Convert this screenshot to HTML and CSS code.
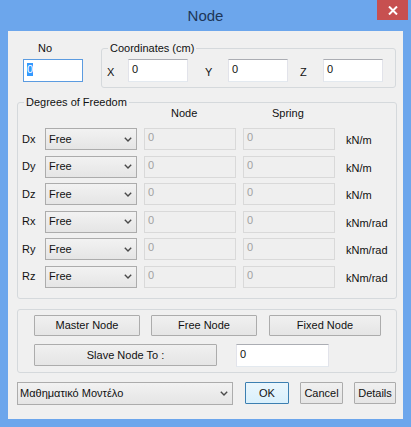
FILE: index.html
```html
<!DOCTYPE html>
<html lang="en">
<head>
    <meta charset="UTF-8">
    <title>Node</title>
    <link rel="stylesheet" href="styles.css">
</head>
<body>
    <div class="window">
        <div class="titlebar">
            <span class="title">Node</span>
            <div class="close-btn">
                <svg width="10" height="9" viewBox="0 0 10 9"><path d="M1 0.5 L9 8.5 M9 0.5 L1 8.5" stroke="#fff" stroke-width="2" fill="none"/></svg>
            </div>
        </div>

        <div class="client">
            <div class="top-row">
                <div class="no-block">
                    <div class="no-label">No</div>
                    <div class="textbox focused"><span class="sel">0</span></div>
                </div>
                <fieldset class="group coords">
                    <legend>Coordinates (cm)</legend>
                    <div class="coord-row">
                        <span class="coord-label">X</span>
                        <div class="textbox coord-box">0</div>
                        <span class="coord-label spaced-y">Y</span>
                        <div class="textbox coord-box">0</div>
                        <span class="coord-label spaced-z">Z</span>
                        <div class="textbox coord-box">0</div>
                    </div>
                </fieldset>
            </div>

            <fieldset class="group dof">
                <legend>Degrees of Freedom</legend>
                <div class="dof-head">
                    <span class="col-node">Node</span>
                    <span>Spring</span>
                </div>
                <div class="dof-rows" id="dofRows"></div>
            </fieldset>

            <div class="group actions">
                <div class="action-row">
                    <div class="btn master-btn">Master Node</div>
                    <div class="btn free-btn">Free Node</div>
                    <div class="btn fixed-btn">Fixed Node</div>
                </div>
                <div class="action-row second">
                    <div class="btn slave-btn">Slave Node To :</div>
                    <div class="textbox slave-box">0</div>
                </div>
            </div>

            <div class="bottom-row">
                <div class="combo model-combo">
                    <span>Μαθηματικό Μοντέλο</span>
                    <svg class="chevron" width="8" height="5" viewBox="0 0 8 5"><path d="M0.8 0.8 L4 4 L7.2 0.8" stroke="#4a4a4a" stroke-width="1.4" fill="none"/></svg>
                </div>
                <div class="btn ok-btn">OK</div>
                <div class="btn cancel-btn">Cancel</div>
                <div class="btn details-btn">Details</div>
            </div>
        </div>
    </div>

    <script>
        const dofs = [
            { name: 'Dx', unit: 'kN/m' },
            { name: 'Dy', unit: 'kN/m' },
            { name: 'Dz', unit: 'kN/m' },
            { name: 'Rx', unit: 'kNm/rad' },
            { name: 'Ry', unit: 'kNm/rad' },
            { name: 'Rz', unit: 'kNm/rad' }
        ];

        const rows = document.getElementById('dofRows');
        dofs.forEach(dof => {
            const row = `<div class="dof-row">
                <span class="dof-label">${dof.name}</span>
                <div class="combo dof-combo">
                    <span>Free</span>
                    <svg class="chevron" width="8" height="5" viewBox="0 0 8 5"><path d="M0.8 0.8 L4 4 L7.2 0.8" stroke="#4a4a4a" stroke-width="1.4" fill="none"/></svg>
                </div>
                <div class="textbox disabled dof-box">0</div>
                <div class="textbox disabled dof-box">0</div>
                <span class="unit">${dof.unit}</span>
            </div>`;
            rows.insertAdjacentHTML('beforeend', row);
        });
    </script>
</body>
</html>
```

FILE: styles.css
```css
* { box-sizing: border-box; }
body { margin: 0; font-family: "Liberation Sans", Arial, sans-serif; font-size: 11px; line-height: 13px; color: #111; }

.window { width: 411px; height: 427px; background: #6ca6ec; padding: 0 8px 8px; }

.titlebar { height: 31px; display: flex; justify-content: center; margin: 0 -8px; position: relative; }
.title { font-size: 15px; line-height: 31px; color: #1d3658; }
.close-btn { position: absolute; top: 0; right: 3px; width: 31px; height: 20px; background: #c75050; display: flex; align-items: center; justify-content: center; }

.client { height: 388px; background: #f0f0f0; padding: 11px 6px 0 9px; }

.textbox { height: 23px; background: #fff; border: 1px solid #abadb3; border-color: #abadb3 #e2e3ea #e3e9ef #e2e3ea; padding: 3px 3px 0; line-height: 13px; }
.textbox.focused { border-color: #5b9be0; }
.textbox.disabled { background: #efefef; border-color: #d9d9d9; color: #a2a2a2; padding-top: 2px; }
.sel { background: #3399ff; color: #fff; display: inline-block; width: 6px; }

.top-row { display: flex; align-items: flex-start; }
.no-block { margin-left: 6px; width: 60px; }
.no-label { padding-left: 15px; margin-bottom: 4px; }

.group { border: 1px solid #d5d9dc; border-radius: 3px; margin: 0; min-width: 0; }
.group legend { padding: 0 2px; line-height: 13px; }

.coords { margin-left: 18px; width: 295px; padding: 4px 0 5px 5px; }
.coords legend { margin-left: 1px; }
.coord-row { display: flex; align-items: center; }
.coord-label { width: 21px; padding-top: 3px; }
.coord-label.spaced-y { margin-left: 17px; width: 23px; }
.coord-label.spaced-z { margin-left: 12px; width: 23px; }
.coord-box { width: 60px; }

.dof { margin-top: 8px; width: 380px; padding: 0 0 10px 4px; }
.dof legend { margin-left: 2px; }
.dof-head { display: flex; padding-left: 149px; margin-top: -2px; height: 13px; }
.col-node { width: 101px; }
.dof-rows { display: flex; flex-direction: column; gap: 5.5px; margin-top: 8px; }
.dof-row { display: flex; align-items: center; height: 22px; }
.dof-label { width: 23px; }
.dof-box { width: 92px; height: 22px; margin-left: 7px; }
.unit { margin-left: 11px; padding-top: 3px; }

.combo { display: flex; align-items: center; justify-content: space-between; background: linear-gradient(#f2f2f2, #e5e5e5); border: 1px solid #acacac; padding: 0 4px 0 3px; }
.dof-combo { width: 92px; height: 22px; }
.model-combo { width: 216px; height: 23px; padding-left: 2px; }
.chevron { display: block; }

.actions { margin-top: 10px; width: 380px; padding: 5px 0 5px 16px; }
.action-row { display: flex; align-items: center; }
.action-row.second { margin-top: 8px; }

.btn { display: flex; align-items: center; justify-content: center; height: 21px; background: linear-gradient(#f0f0f0, #e5e5e5); border: 1px solid #acacac; border-radius: 1px; }
.master-btn { width: 106px; }
.free-btn { width: 106px; margin-left: 11px; }
.fixed-btn { width: 112px; margin-left: 12px; }
.slave-btn { width: 183px; height: 22px; }
.slave-box { width: 93px; margin-left: 19px; }

.bottom-row { display: flex; align-items: center; margin-top: 9px; }
.bottom-row .btn { height: 22px; }
.ok-btn { width: 44px; margin-left: 12px; border-color: #3c7fb1; background: linear-gradient(#eaf6fd, #d9f0fc); }
.cancel-btn { width: 43px; margin-left: 11px; }
.details-btn { width: 42px; margin-left: 11px; }
```
